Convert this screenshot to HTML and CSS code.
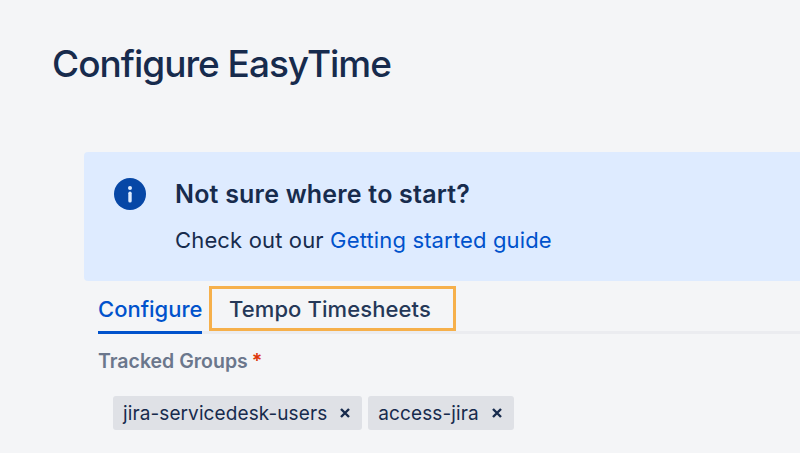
FILE: index.html
```html
<!DOCTYPE html>
<html lang="en">
<head>
<meta charset="utf-8">
<title>Configure EasyTime</title>
<link rel="stylesheet" href="styles.css">
</head>
<body>
<main class="page">
  <h1 class="title">Configure EasyTime</h1>
  <div class="content">
    <section class="banner">
      <svg class="info-icon" viewBox="0 0 32 32" aria-hidden="true">
        <circle cx="16" cy="16" r="16" fill="#0747a6"/>
        <circle cx="16" cy="10" r="2" fill="#deebff"/>
        <rect x="14.3" y="13.6" width="3.4" height="11" rx="1.7" fill="#deebff"/>
      </svg>
      <div class="banner-text">
        <h2 class="banner-title">Not sure where to start?</h2>
        <p class="banner-body">Check out our <a class="link" href="#">Getting started guide</a></p>
      </div>
    </section>
    <nav class="tabs">
      <a class="tab tab-active" href="#">Configure</a>
      <a class="tab tab-marked" href="#">Tempo Timesheets</a>
    </nav>
    <div class="field">
      <div class="label">Tracked Groups<span class="req">*</span></div>
      <div class="chips">
        <span class="chip">jira-servicedesk-users<svg class="x" viewBox="0 0 12 12" aria-hidden="true"><path d="M2 2l8 8M10 2l-8 8"/></svg></span>
        <span class="chip">access-jira<svg class="x" viewBox="0 0 12 12" aria-hidden="true"><path d="M2 2l8 8M10 2l-8 8"/></svg></span>
      </div>
    </div>
  </div>
</main>
</body>
</html>
```
FILE: styles.css
```css
html, body {
  margin: 0;
  height: 100%;
  overflow: hidden;
  background: #f4f5f7;
}
body {
  font-family: Inter, "Liberation Sans", sans-serif;
  color: #172b4d;
}
.page {
  padding: 42px 0 0 52px;
}
.title {
  margin: 0;
  font-size: 37px;
  line-height: 44px;
  font-weight: 500;
  letter-spacing: -1px;
  color: #172b4d;
}
.content {
  margin: 66px -8px 0 32px;
  width: 740px;
}
.banner {
  display: flex;
  height: 129px;
  box-sizing: border-box;
  padding: 26px 30px;
  gap: 29px;
  background: #deebff;
  border-radius: 4px;
}
.info-icon {
  width: 32px;
  height: 32px;
  flex: none;
}
.banner-title {
  margin: 0;
  font-size: 25px;
  line-height: 32px;
  font-weight: 600;
  letter-spacing: 0.2px;
  color: #172b4d;
}
.banner-body {
  margin: 14px 0 0;
  font-size: 22px;
  line-height: 32px;
  letter-spacing: 0.15px;
  color: #172b4d;
}
.link {
  color: #0052cc;
  text-decoration: none;
}
.tabs {
  display: flex;
  align-items: flex-start;
  gap: 7px;
  margin: 5px 0 0 14px;
  padding-bottom: 0;
  height: 48px;
  box-sizing: border-box;
  border-bottom: 3px solid #ebecf0;
}
.tab {
  font-size: 22px;
  line-height: 47px;
  text-decoration: none;
  font-weight: 500;
  box-sizing: border-box;
  height: 48px;
}
.tab-active {
  color: #0052cc;
  border-bottom: 3px solid #0052cc;
  width: 104px;
}
.tab-marked {
  color: #253858;
  width: 247px;
  height: 45px;
  line-height: 41px;
  padding-left: 17px;
  letter-spacing: 0.1px;
  border: 3px solid #f6b04b;
}
.field {
  margin-left: 14px;
}
.label {
  margin-top: 15px;
  font-size: 19.5px;
  line-height: 24px;
  font-weight: 600;
  color: #6b778c;
}
.req {
  margin-left: 4px;
  color: #de350b;
}
.chips {
  display: flex;
  gap: 6px;
  margin: 23px 0 0 15px;
}
.chip {
  display: flex;
  align-items: center;
  height: 34px;
  padding: 0 11px 0 10px;
  gap: 12px;
  font-size: 19px;
  letter-spacing: 0.1px;
  color: #172b4d;
  background: #dfe1e6;
  border-radius: 3px;
}
.x {
  width: 12px;
  height: 12px;
  fill: none;
  stroke: #172b4d;
  stroke-width: 2.4;
}
```
